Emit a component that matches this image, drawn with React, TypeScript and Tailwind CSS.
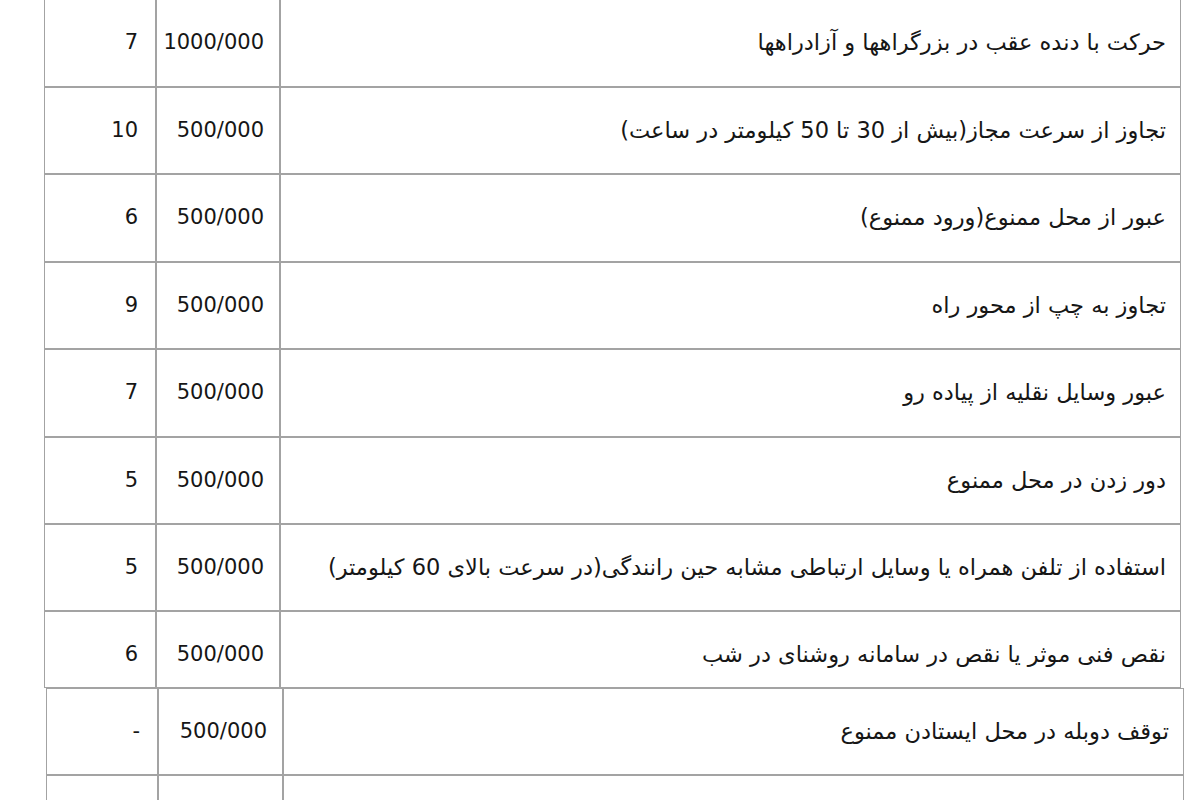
const rows = [
  { pts: "7", fine: "1000/000", text: "حرکت با دنده عقب در بزرگراهها و آزادراهها", h: "h-[88px]" },
  { pts: "10", fine: "500/000", text: "تجاوز از سرعت مجاز(بیش از 30 تا 50 کیلومتر در ساعت)", h: "h-[87px]" },
  { pts: "6", fine: "500/000", text: "عبور از محل ممنوع(ورود ممنوع)", h: "h-[88px]" },
  { pts: "9", fine: "500/000", text: "تجاوز به چپ از محور راه", h: "h-[87px]" },
  { pts: "7", fine: "500/000", text: "عبور وسایل نقلیه از پیاده رو", h: "h-[88px]" },
  { pts: "5", fine: "500/000", text: "دور زدن در محل ممنوع", h: "h-[87px]" },
  { pts: "5", fine: "500/000", text: "استفاده از تلفن همراه یا وسایل ارتباطی مشابه حین رانندگی(در سرعت بالای 60 کیلومتر)", h: "h-[87px]" },
];

const more = [
  { pts: "-", fine: "500/000", text: "توقف دوبله در محل ایستادن ممنوع" },
  { pts: "-", fine: "500/000", text: "توقف در محل ممنوع" },
];

const cell = "border border-[#a3a3a3] pl-2 text-right align-middle";
const desc = `${cell} pr-[14px] text-[22.5px]`;
const num = `${cell} pr-[15px]`;
const pts = `${cell} pr-[17px]`;

export default function App() {
  return (
    <div
      className="min-h-screen bg-white text-[#161616] text-[21px] overflow-hidden"
      style={{ fontFamily: '"DejaVu Sans", Tahoma, sans-serif' }}
    >
      {/* top slice */}
      <div className="pl-[44px] -mt-[1px]">
        <table dir="rtl" className="w-[1137px] table-fixed border-separate border-spacing-0">
          <colgroup>
            <col className="w-[901px]" />
            <col className="w-[124px]" />
            <col className="w-[112px]" />
          </colgroup>
          <tbody>
            {rows.map((r, i) => (
              <tr key={i}>
                <td className={`${desc} ${r.h}`}>{r.text}</td>
                <td className={`${num} ${r.h}`}>{r.fine}</td>
                <td className={`${pts} ${r.h}`}>{r.pts}</td>
              </tr>
            ))}
            <tr>
              <td className={`${desc} h-[77px] pt-[10px]`}>نقص فنی موثر یا نقص در سامانه روشنای در شب</td>
              <td className={`${num} h-[77px] pt-[10px]`}>500/000</td>
              <td className={`${pts} h-[77px] pt-[10px]`}>6</td>
            </tr>
          </tbody>
        </table>
      </div>

      {/* second slice, pasted slightly to the right */}
      <div className="pl-[46px]">
        <table dir="rtl" className="w-[1138px] table-fixed border-separate border-spacing-0">
          <colgroup>
            <col className="w-[901px]" />
            <col className="w-[125px]" />
            <col className="w-[112px]" />
          </colgroup>
          <tbody>
            {more.map((r, i) => (
              <tr key={i}>
                <td className={`${desc} h-[87px]`}>{r.text}</td>
                <td className={`${num} h-[87px]`}>{r.fine}</td>
                <td className={`${pts} h-[87px]`}>{r.pts}</td>
              </tr>
            ))}
          </tbody>
        </table>
      </div>
    </div>
  );
}
